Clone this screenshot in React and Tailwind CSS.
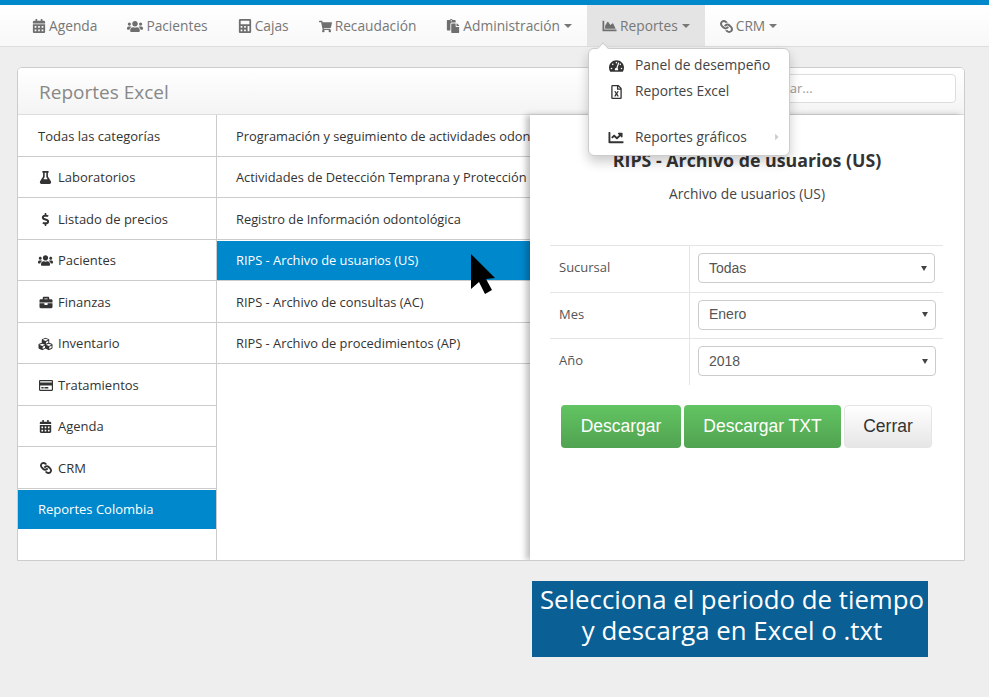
import {
  FaCalendarAlt,
  FaUsers,
  FaCalculator,
  FaShoppingCart,
  FaPaste,
  FaChartArea,
  FaLink,
  FaTachometerAlt,
  FaRegFileExcel,
  FaChartLine,
  FaFlask,
  FaDollarSign,
  FaBriefcase,
  FaCubes,
  FaRegCreditCard,
  FaCaretRight,
} from "react-icons/fa";

const navItems = [
  { label: "Agenda", icon: FaCalendarAlt, size: "h-[14px] w-[14px]" },
  { label: "Pacientes", icon: FaUsers, size: "h-[15px] w-[16px]" },
  { label: "Cajas", icon: FaCalculator, size: "h-[14px] w-[14px]" },
  { label: "Recaudación", icon: FaShoppingCart, size: "h-[13px] w-[13px]" },
  { label: "Administración", icon: FaPaste, size: "h-[14px] w-[14px]", caret: true },
  { label: "Reportes", icon: FaChartArea, size: "h-[14px] w-[15px]", caret: true, active: true },
  { label: "CRM", icon: FaLink, size: "h-[13px] w-[13px] rotate-90", caret: true },
];

const categories = [
  { label: "Todas las categorías" },
  { label: "Laboratorios", icon: FaFlask, size: "h-[13px] w-[13px]" },
  { label: "Listado de precios", icon: FaDollarSign, size: "h-[13px] w-[13px]" },
  { label: "Pacientes", icon: FaUsers, size: "h-[15px] w-[15px]" },
  { label: "Finanzas", icon: FaBriefcase, size: "h-[13px] w-[14px]" },
  { label: "Inventario", icon: FaCubes, size: "h-[14px] w-[15px]" },
  { label: "Tratamientos", icon: FaRegCreditCard, size: "h-[13px] w-[14px]" },
  { label: "Agenda", icon: FaCalendarAlt, size: "h-[13px] w-[13px]" },
  { label: "CRM", icon: FaLink, size: "h-[12px] w-[12px] rotate-90" },
];

const reports = [
  "Programación y seguimiento de actividades odontológicas",
  "Actividades de Detección Temprana y Protección Específica",
  "Registro de Información odontológica",
  "RIPS - Archivo de usuarios (US)",
  "RIPS - Archivo de consultas (AC)",
  "RIPS - Archivo de procedimientos (AP)",
];

const filters = [
  { label: "Sucursal", value: "Todas", width: "w-[237px]" },
  { label: "Mes", value: "Enero", width: "w-[238px]" },
  { label: "Año", value: "2018", width: "w-[238px]" },
];

function Caret() {
  return (
    <span className="ml-[4px] inline-block h-0 w-0 border-x-[4px] border-t-[4px] border-x-transparent border-t-[#777]" />
  );
}

function Navbar() {
  return (
    <div className="flex h-[42px] border-b border-[#ddd] bg-gradient-to-b from-white to-[#f8f8f8] pl-[17px] text-[13.75px] text-[#777]">
      {navItems.map((item) => (
        <div
          key={item.label}
          className={`flex items-center px-[15px] pt-[1px] ${item.active ? "bg-[#e4e4e4]" : ""}`}
        >
          <item.icon className={`mr-[3px] text-[#6f6f6f] ${item.size}`} />
          <span>{item.label}</span>
          {item.caret && <Caret />}
        </div>
      ))}
    </div>
  );
}

function DropdownMenu() {
  return (
    <div className="absolute left-[588px] top-[48px] z-20 h-[108px] w-[202px] rounded-[6px] border border-[#ccc] bg-white text-[13.8px] text-[#444] shadow-[0_6px_12px_rgba(0,0,0,0.2)]">
      <span className="absolute left-[10px] top-[-5px] h-[8px] w-[8px] rotate-45 border-l border-t border-[#ccc] bg-white" />
      <div className="absolute left-[20px] top-[6.5px] flex h-[20px] items-center">
        <FaTachometerAlt className="h-[14px] w-[15px] text-[#333]" />
        <span className="ml-[11px]">Panel de desempeño</span>
      </div>
      <div className="absolute left-[20px] top-[32.5px] flex h-[20px] items-center">
        <FaRegFileExcel className="h-[14px] w-[15px] text-[#333]" />
        <span className="ml-[11px]">Reportes Excel</span>
      </div>
      <div className="absolute left-[19px] top-[78px] flex h-[20px] items-center">
        <FaChartLine className="h-[15px] w-[16px] text-[#333]" />
        <span className="ml-[11px]">Reportes gráficos</span>
      </div>
      <FaCaretRight className="absolute left-[184px] top-[83px] h-[10px] w-[8px] text-[#ccc]" />
    </div>
  );
}

function Cursor() {
  return (
    <svg
      className="absolute left-[470px] top-[253px] z-10"
      width="26"
      height="42"
      viewBox="0 0 26 42"
    >
      <path d="M1 1 L25 25 L16 26 L22 37 L15 41 L9 29 L1 36 Z" fill="#000" />
    </svg>
  );
}

function FilterRow({ label, value, width }) {
  return (
    <div className="flex h-[46.5px] border-t border-[#e5e5e5]">
      <div className="flex w-[140px] items-center border-r border-[#e5e5e5] pb-[2px] pl-[9px] text-[13px] text-[#555]">
        {label}
      </div>
      <div className="pl-[8px] pt-[7px]">
        <div
          className={`flex h-[30px] ${width} items-center justify-between rounded-[4px] border border-[#ccc] pl-[10px] pr-[7px] font-['Liberation_Sans',sans-serif] text-[14px] text-[#555]`}
        >
          <span>{value}</span>
          <span className="h-0 w-0 border-x-[3.5px] border-t-[5px] border-x-transparent border-t-[#444]" />
        </div>
      </div>
    </div>
  );
}

function ReportForm() {
  return (
    <div className="relative z-[5] w-[434px] shrink-0 bg-white shadow-[-4px_0_6px_rgba(0,0,0,0.25)]">
      <h2 className="mt-[33px] text-center text-[17.8px] font-bold leading-[24px] text-[#333]">
        RIPS - Archivo de usuarios (US)
      </h2>
      <p className="mt-[13px] text-center text-[13.8px] leading-[18px] text-[#444]">
        Archivo de usuarios (US)
      </p>
      <div className="ml-[20px] mt-[42px] w-[393px]">
        {filters.map((f) => (
          <FilterRow key={f.label} {...f} />
        ))}
      </div>
      <div className="ml-[31px] mt-[20px] flex gap-[3px] font-['Liberation_Sans',sans-serif] text-[17.5px]">
        <button className="h-[43px] w-[120px] rounded-[4px] bg-gradient-to-b from-[#62c462] to-[#51a351] pt-[1px] text-white">
          Descargar
        </button>
        <button className="h-[43px] w-[157px] rounded-[4px] bg-gradient-to-b from-[#62c462] to-[#51a351] pt-[1px] text-white">
          Descargar TXT
        </button>
        <button className="h-[43px] w-[88px] rounded-[4px] border border-[#e5e5e5] bg-gradient-to-b from-white to-[#e6e6e6] pt-[1px] text-[#333]">
          Cerrar
        </button>
      </div>
    </div>
  );
}

export default function App() {
  return (
    <div className="relative h-[697px] w-[989px] overflow-hidden bg-[#eee] font-['Open_Sans',sans-serif]">
      <div className="h-[5px] bg-[#0088cc]" />
      <Navbar />

      <div className="ml-[17px] mt-[20px] h-[494px] w-[948px] overflow-hidden rounded-t-[5px] border border-[#ccc] bg-white">
        <div className="flex h-[47px] justify-between border-b border-[#ddd] bg-gradient-to-b from-white to-[#f4f4f4] pl-[21px] pr-[8px]">
          <h1 className="mt-[10px] text-[19px] font-normal leading-[28px] text-[#888]">Reportes Excel</h1>
          <div className="mt-[6px] flex h-[29px] w-[210px] items-center rounded-[4px] border border-[#ddd] bg-white pl-[14px] text-[13px] text-[#999]">
            Buscar...
          </div>
        </div>

        <div className="flex h-[445px]">
          <div className="w-[199px] shrink-0 border-r border-[#ccc] text-[13px] text-[#333]">
            {categories.map((c) => (
              <div
                key={c.label}
                className="flex h-[41.5px] items-center border-b border-[#ccc] pl-[20px] pt-[2px]"
              >
                {c.icon && (
                  <span className="mr-[5px] flex w-[15px] justify-center">
                    <c.icon className={c.size} />
                  </span>
                )}
                <span>{c.label}</span>
              </div>
            ))}
            <div className="mt-[1px] flex h-[39px] items-center bg-[#0088cc] pl-[20px] pt-[1px] text-white">
              Reportes Colombia
            </div>
          </div>

          <div className="flex min-w-0 flex-1">
            <div className="w-[313px] shrink-0 overflow-hidden text-[12.85px] text-[#333]">
              {reports.map((r) => (
                <div
                  key={r}
                  className={
                    r.includes("(US)")
                      ? "flex h-[41.5px] items-center whitespace-nowrap border-t border-b border-t-white border-b-[#ccc] bg-[#0088cc] pl-[19px] pt-[1px] text-white"
                      : "flex h-[41.5px] items-center whitespace-nowrap border-b border-[#ccc] pl-[19px] pt-[2px]"
                  }
                >
                  <span>{r}</span>
                </div>
              ))}
            </div>
            <ReportForm />
          </div>
        </div>
      </div>

      <div className="ml-[532px] mt-[20px] flex h-[76px] w-[396px] items-start justify-center bg-[#0a5f95] pl-[4px] pt-[3px] text-center text-[25.8px] leading-[31px] text-white">
        <p>
          Selecciona el periodo de tiempo
          <br />y descarga en Excel o .txt
        </p>
      </div>

      <Cursor />
      <DropdownMenu />
    </div>
  );
}
